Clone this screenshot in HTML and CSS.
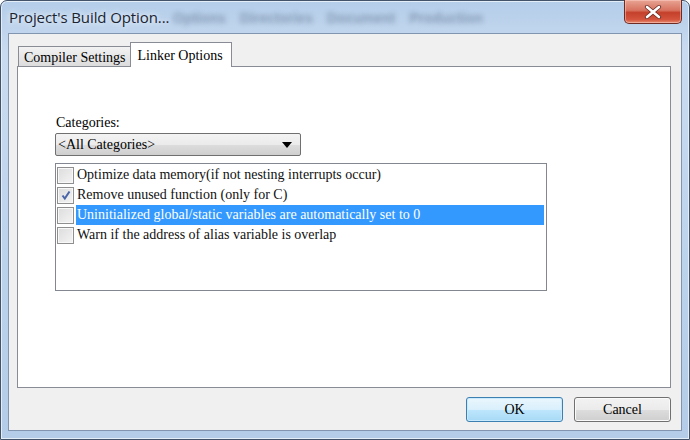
FILE: index.html
```html
<!DOCTYPE html>
<html>
<head>
    <meta charset="utf-8"/>
    <title>Project's Build Option</title>
    <link rel="stylesheet" href="styles.css">
</head>
<body>
<div class="window">
    <div class="titlebar">
        <span class="caption">Project's Build Option...</span>
        <span class="ghost">Options Directories Document Production</span>
        <div class="close">
            <svg width="20" height="14" viewBox="0 0 20 14">
                <path d="M4 2 L16 12 M16 2 L4 12" stroke="#6b2a22" stroke-width="4.2" stroke-linecap="round"/>
                <path d="M4 2 L16 12 M16 2 L4 12" stroke="#fff" stroke-width="2.6" stroke-linecap="round"/>
            </svg>
        </div>
    </div>
    <div class="client">
        <div class="tabs">
            <div class="tab">Compiler Settings</div>
            <div class="tab active">Linker Options</div>
        </div>
        <div class="panel">
            <div class="label">Categories:</div>
            <div class="combo">
                <span>&lt;All Categories&gt;</span>
                <span class="arrow"></span>
            </div>
            <div class="listbox">
                <div class="row"><span class="check"></span><span class="text">Optimize data memory(if not nesting interrupts occur)</span></div>
                <div class="row"><span class="check on">
                    <svg width="14" height="14" viewBox="0 0 14 14"><path d="M3.5 7.5 L5.8 10.5 L10.5 3.5" fill="none" stroke="#4a64a8" stroke-width="2"/></svg>
                </span><span class="text">Remove unused function (only for C)</span></div>
                <div class="row"><span class="check"></span><span class="text selected">Uninitialized global/static variables are automatically set to 0</span></div>
                <div class="row"><span class="check"></span><span class="text">Warn if the address of alias variable is overlap</span></div>
            </div>
        </div>
        <div class="buttons">
            <div class="btn default">OK</div>
            <div class="btn">Cancel</div>
        </div>
    </div>
</div>
</body>
</html>
```

FILE: styles.css
```css
* {
    margin: 0;
    padding: 0;
    box-sizing: border-box;
}
body {
    width: 690px;
    height: 440px;
    overflow: hidden;
    font-family: "Liberation Serif", serif;
    font-size: 14px;
    color: #000;
}
.window {
    width: 690px;
    height: 440px;
    border: 1px solid #43536a;
    border-radius: 7px 7px 0 0;
    background: linear-gradient(to bottom, #b4cde9 0%, #c9dbf0 12%, #bcd3ec 60%, #b5cce8 100%);
    display: flex;
    flex-direction: column;
    box-shadow: inset 0 0 0 1px #e4eef9;
}
.titlebar {
    height: 33px;
    display: flex;
    align-items: flex-start;
    padding-left: 8px;
    position: relative;
}
.caption {
    font-family: "Open Sans", "Noto Sans", sans-serif;
    font-size: 15px;
    color: #1c2430;
    margin-top: 6px;
    letter-spacing: -0.1px;
    position: relative;
    z-index: 1;
    text-shadow: 0 0 8px #e8f1fb, 0 0 4px #e8f1fb;
}
.ghost {
    position: absolute;
    left: 172px;
    top: 9px;
    font-family: "Liberation Sans", sans-serif;
    font-size: 14px;
    font-weight: bold;
    word-spacing: 10px;
    color: transparent;
    text-shadow: 0 0 5px rgba(40, 60, 90, 0.35);
}
.close {
    margin-left: auto;
    margin-right: 7px;
    margin-top: -1px;
    width: 58px;
    height: 24px;
    border: 1px solid #6e2b24;
    border-top: none;
    border-radius: 0 0 5px 5px;
    background: linear-gradient(to bottom, #e8a494 0%, #d7725f 45%, #c4402a 55%, #d4543e 85%, #e58c6f 100%);
    box-shadow: inset 0 0 0 1px rgba(255, 210, 200, 0.5);
    display: flex;
    align-items: center;
    justify-content: center;
}
.client {
    flex: 1;
    margin: 0 7px 8px 7px;
    border: 1px solid #8195b0;
    background: #f0f0f0;
    padding: 8px 10px 8px 8px;
    display: flex;
    flex-direction: column;
}
.tabs {
    display: flex;
    align-items: flex-end;
    padding-left: 1px;
    height: 24px;
}
.tab {
    height: 20px;
    padding: 1px 4px 0 5px;
    line-height: 20px;
    border: 1px solid #898c95;
    border-bottom: none;
    background: linear-gradient(to bottom, #f2f2f2, #dcdcdc);
}
.tab.active {
    height: 25px;
    margin-bottom: -1px;
    background: #fff;
    border-left: 1px solid #898c95;
    margin-left: -1px;
    padding: 1px 8px 0 7px;
    line-height: 24px;
    position: relative;
    z-index: 1;
}
.panel {
    height: 322px;
    border: 1px solid #898c95;
    background: #fff;
    padding: 47px 0 0 38px;
}
.label {
    height: 18px;
    line-height: 18px;
}
.combo {
    width: 246px;
    height: 23px;
    margin-top: 1px;
    margin-left: -1px;
    border: 1px solid #707070;
    border-radius: 2px;
    background: linear-gradient(to bottom, #f3f3f3 0%, #ebebeb 50%, #dddddd 51%, #cfcfcf 100%);
    display: flex;
    align-items: center;
    justify-content: space-between;
    padding: 0 8px 0 2px;
    line-height: 20px;
}
.arrow {
    width: 0;
    height: 0;
    border-left: 5px solid transparent;
    border-right: 5px solid transparent;
    border-top: 6px solid #000;
}
.listbox {
    width: 492px;
    height: 128px;
    margin-top: 7px;
    margin-left: -1px;
    border: 1px solid #828790;
    padding: 1px;
}
.row {
    height: 20px;
    display: flex;
    align-items: center;
}
.check {
    width: 17px;
    height: 17px;
    margin-right: 2px;
    border: 1px solid #8f8f8f;
    background: linear-gradient(135deg, #dcdcdc, #f4f4f4);
    box-shadow: inset 0 0 0 1px #f8f8f8;
    display: flex;
    align-items: center;
    justify-content: center;
}
.text {
    height: 20px;
    line-height: 20px;
    padding-left: 1px;
    white-space: nowrap;
    color: #111;
}
.text.selected {
    flex: 1;
    margin-right: 1px;
    background: #3399ff;
    color: #fff;
}
.buttons {
    display: flex;
    justify-content: flex-end;
    gap: 11px;
    margin-top: 9px;
}
.btn {
    width: 97px;
    height: 25px;
    border: 1px solid #707070;
    border-radius: 3px;
    background: linear-gradient(to bottom, #f2f2f2 0%, #ebebeb 50%, #dddddd 51%, #cfcfcf 100%);
    box-shadow: inset 0 0 0 1px #fafafa;
    text-align: center;
    line-height: 23px;
}
.btn.default {
    border-color: #3c7fb1;
    background: linear-gradient(to bottom, #eaf6fd 0%, #d9f0fc 50%, #bee6fd 51%, #a7d9f5 100%);
    box-shadow: inset 0 0 0 1px #c8eafc;
}
```
